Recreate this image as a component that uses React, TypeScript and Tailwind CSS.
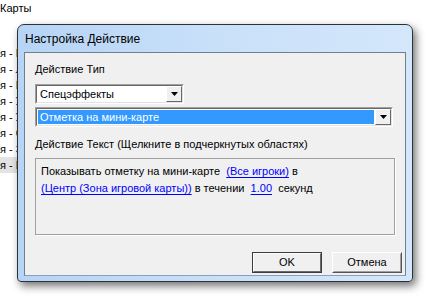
import React from "react";

const rows = ["я - К", "я - Л", "я - Е", "я - У", "я - У", "я - С", "я - З", "я - В"];

function DropArrow() {
  return (
    <div className="w-[16px] h-[16px] bg-[#f0f0f0] border border-t-white border-l-white border-r-[#696969] border-b-[#696969] flex items-center justify-center">
      <svg width="7" height="4" viewBox="0 0 7 4">
        <path d="M0 0h7L3.5 4z" fill="#000" />
      </svg>
    </div>
  );
}

function Combo({ text, selected, className }: { text: string; selected?: boolean; className: string }) {
  return (
    <div className={`${className} h-[20px] border border-t-[#a0a0a0] border-l-[#a0a0a0] border-r-white border-b-white`}>
      <div className="h-full border border-t-[#696969] border-l-[#696969] border-r-[#e3e3e3] border-b-[#e3e3e3] bg-white flex">
        <div className="flex-1 p-[1px] flex">
          <div className={`flex-1 flex items-center pl-[2px] leading-[13px] ${selected ? "bg-[#3399ff] text-white" : "text-black"}`}>{text}</div>
        </div>
        <DropArrow />
      </div>
    </div>
  );
}

function Link({ children }: { children: string }) {
  return <span className="text-[#0000ff] underline underline-offset-2">{children}</span>;
}

export default function App() {
  return (
    <div className="relative w-[425px] h-[303px] overflow-hidden bg-white text-[11px] text-black" style={{ fontFamily: '"Liberation Sans", Arial, sans-serif' }}>
      {/* background window, mostly hidden behind the dialog */}
      <div className="leading-[14px] pt-[1px]">Карты</div>
      <div className="mt-[30px] w-[17px] overflow-hidden">
        {rows.map((r, i) => (
          <div key={i} className={`h-[16px] leading-[16px] whitespace-nowrap ${i === rows.length - 1 ? "bg-[#e3e3e3]" : ""}`}>
            {r}
          </div>
        ))}
      </div>

      {/* dialog */}
      <div className="absolute left-[17px] top-[24px] w-[396px] h-[258px] rounded-t-[7px] rounded-b-[4px] border border-[#2d3238] bg-gradient-to-r from-[#b6d4f5] via-[#c9e0f9] to-[#d4e7fb] shadow-[3px_4px_9px_rgba(0,0,0,0.55)] flex flex-col px-[6px] pb-[5px]">
        <div className="h-[27px] flex items-center pl-[1px] pt-[1px] text-[12px] leading-[15px] text-black">Настройка Действие</div>
        <div className="flex-1 border border-[#6f7f90] border-b-[#8aa0b8] bg-[#f0f0f0] flex flex-col pl-[10px]">
          <div className="mt-[10px] leading-[13px]">Действие Тип</div>
          <Combo className="mt-[8px] w-[149px]" text="Спецэффекты" />
          <Combo className="mt-[3px] w-[358px]" text="Отметка на мини-карте" selected />
          <div className="mt-[11px] leading-[13px]">Действие Текст (Щелкните в подчеркнутых областях)</div>
          <div className="mt-[7px] w-[360px] h-[77px] border border-[#a0a0a0] shadow-[1px_1px_0_#fff] pl-[5px] pt-[4px] leading-[17px] whitespace-pre">
            <div>
              Показывать отметку на мини-карте  <Link>(Все игроки)</Link> в
            </div>
            <div>
              <Link>(Центр (Зона игровой карты))</Link> в течении  <Link>1.00</Link>  секунд
            </div>
          </div>
          <div className="mt-auto mb-[2px] mr-[3px] flex justify-end gap-[10px] leading-[13px]">
            <div className="w-[70px] h-[21px] border border-[#3c3c3c] bg-[#f0f0f0]">
              <div className="h-full border border-t-white border-l-white border-r-[#696969] border-b-[#696969] flex items-center justify-center">OK</div>
            </div>
            <div className="w-[70px] h-[21px] border border-t-white border-l-white border-r-[#555] border-b-[#555] bg-[#f0f0f0]">
              <div className="h-full border border-t-[#f0f0f0] border-l-[#f0f0f0] border-r-[#a0a0a0] border-b-[#a0a0a0] flex items-center justify-center">Отмена</div>
            </div>
          </div>
        </div>
      </div>
    </div>
  );
}
